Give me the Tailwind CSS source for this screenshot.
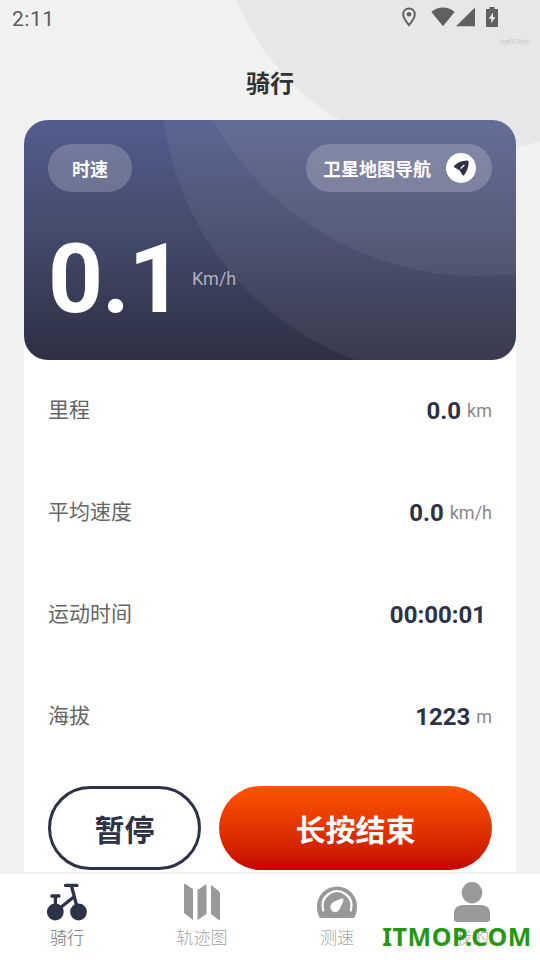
<!DOCTYPE html>
<html lang="zh-CN">
<head>
<meta charset="UTF-8">
<meta name="viewport" content="width=device-width, initial-scale=1">
<title>骑行</title>
<script src="https://cdn.jsdelivr.net/npm/@tailwindcss/browser@4"></script>
</head>
<body class="overflow-hidden bg-[#f1f1f1] font-['Roboto','Noto_Sans_CJK_SC',sans-serif]">
<div class="relative isolate flex h-[960px] w-[540px] flex-col overflow-hidden">
  <svg class="absolute inset-0 -z-10" width="540" height="200"><circle cx="463" cy="-90" r="243.5" fill="#e7e7e7"/></svg>

  <header class="relative flex h-9 shrink-0 items-center justify-between pl-3 pr-[42px] text-[#5c5c5c]">
    <span class="pt-[2px] text-[21px] leading-6 tracking-[0.5px]">2:11</span>
    <div class="flex items-center pb-[2px]">
      <svg class="mr-[15px]" width="14" height="20" viewBox="0 0 14 20" fill="none" stroke="#606060"><path d="M7 1.500C3.700 1.500 1.200 4 1.200 7.200 1.200 11 7 18.200 7 18.200S12.800 11 12.800 7.200C12.800 4 10.300 1.500 7 1.500Z" stroke-width="1.900"/><circle cx="7" cy="7.200" r="2.300" fill="#606060" stroke="none"/></svg>
      <svg width="24" height="20" viewBox="0 0 24 20" fill="#606060"><path d="M12 19.200.400 5C3 2.500 7.300.600 12 .600S21 2.500 23.600 5Z"/></svg>
      <svg class="ml-px mr-[11px]" width="19" height="20" viewBox="0 0 19 20" fill="#606060"><path d="M19 .500V19.200H0Z"/></svg>
      <svg width="12" height="22" viewBox="0 0 12 22"><path d="M3.500 1h5v2H11q1 0 1 1v16q0 1-1 1H1q-1 0-1-1V4q0-1 1-1h2.500Z" fill="#606060"/><path d="M7 6.500 2.700 12.700H5.200v4.500L9.400 11H7Z" fill="#e7e7e7"/></svg>
    </div>
    <span class="absolute right-[10px] top-9 text-[7.500px] leading-[11px] tracking-[-0.2px] text-[#cbcbcb]">6af97e6c</span>
  </header>

  <h1 class="flex h-[84px] shrink-0 items-center justify-center pt-[11px] text-[24px] leading-9 font-bold text-[#333]">骑行</h1>

  <main class="mx-6 flex h-[752px] shrink-0 flex-col bg-linear-to-b from-transparent from-[100px] to-white to-[100px]">
    <section class="relative isolate flex h-60 shrink-0 flex-col overflow-hidden rounded-3xl bg-linear-to-b from-[#535d8d] via-[#444b6d] via-45% to-[#2d3043] px-6 pt-6 text-white">
      <svg class="absolute inset-0 -z-10" width="492" height="240" fill="#fff"><circle cx="434.500" cy="-39" r="297.500" fill-opacity=".055"/><circle cx="454" cy="-147" r="303" fill-opacity=".055"/></svg>
      <div class="flex items-center justify-between">
        <div class="flex h-12 w-[84px] items-center justify-center rounded-full bg-white/20 pt-[3px] text-[18px] font-bold">时速</div>
        <div class="flex h-12 w-[186px] items-center justify-between rounded-full bg-white/20 pl-[17px] pr-4">
          <span class="pt-[3px] text-[18px] font-bold">卫星地图导航</span>
          <span class="flex size-[30px] items-center justify-center rounded-full bg-white">
            <svg width="30" height="30" viewBox="0 0 30 30"><path d="M8.700 12.200C12 9.500 16 7.700 20.800 7.600q2-.100 1.900 2C22.500 14 21 18.500 18.300 22q-1.400 1.300-2.200-.400L13.800 17.400 8.600 14.500q-1.500-1.100.100-2.300Z" fill="#2d3246"/><path d="M14.900 15.200 18 12.300" stroke="#fff" stroke-width="1.200" stroke-linecap="round"/></svg>
          </span>
        </div>
      </div>
      <div class="mt-[29px] flex items-start">
        <span class="w-[144px] text-[96px] leading-[116px] font-bold tracking-[-1.200px]">0.1</span>
        <span class="mt-[46px] text-[18px] leading-6 text-[#b0b2be]">Km/h</span>
      </div>
    </section>

    <dl class="flex h-[408px] shrink-0 flex-col px-6 text-[#666]">
      <div class="flex h-[102px] items-center justify-between"><dt class="pb-[3px] text-[21px] leading-8">里程</dt><dd class="flex items-center gap-[6px]"><b class="text-[24px] leading-8 text-[#2d3246]">0.0</b><span class="text-[18px] leading-8 text-[#888]">km</span></dd></div>
      <div class="flex h-[102px] items-center justify-between"><dt class="pb-[3px] text-[21px] leading-8">平均速度</dt><dd class="flex items-center gap-[6px]"><b class="text-[24px] leading-8 text-[#2d3246]">0.0</b><span class="text-[18px] leading-8 text-[#888]">km/h</span></dd></div>
      <div class="flex h-[102px] items-center justify-between"><dt class="pb-[3px] text-[21px] leading-8">运动时间</dt><dd class="pr-[6px]"><b class="text-[24px] leading-8 text-[#2d3246]">00:00:01</b></dd></div>
      <div class="flex h-[102px] items-center justify-between"><dt class="pb-[3px] text-[21px] leading-8">海拔</dt><dd class="flex items-center gap-[6px]"><b class="text-[24px] leading-8 text-[#2d3246]">1223</b><span class="text-[18px] leading-8 text-[#888]">m</span></dd></div>
    </dl>

    <div class="flex gap-[18px] px-6 pt-[18px] text-[30px] font-bold">
      <button class="h-[84px] w-[153px] rounded-full border-3 border-[#2d3246] pt-[4px] text-[#2d3246]">暂停</button>
      <button class="h-[84px] flex-1 rounded-full bg-linear-to-b from-[#ff5300] to-[#c50000] pt-[4px] text-white">长按结束</button>
    </div>
  </main>

  <nav class="relative grid h-[88px] shrink-0 grid-cols-4 border-t-2 border-[#f3f3f3] bg-white text-[17px] leading-6 font-light text-[#a5a5a5]">
    <div class="flex flex-col items-center pt-[6px] pr-px text-[#707070]">
      <svg class="shrink-0" width="42" height="44" viewBox="0 0 42 44" fill="none" stroke="#2d3246" stroke-linecap="round"><circle cx="9.300" cy="32" r="8.400" fill="#2d3246" stroke="none"/><circle cx="32.500" cy="32" r="8.400" fill="#2d3246" stroke="none"/><path d="M5.800 16H13M9.400 16v10M19.500 5.400H31M25.500 6 31 27M27.800 17 13 28.700" stroke-width="3.300"/></svg>
      <span class="mt-[2px]">骑行</span>
    </div>
    <div class="flex flex-col items-center pt-[6px] pr-px">
      <svg class="shrink-0" width="36" height="44" viewBox="0 0 36 44" fill="#999"><path d="M0 5q0-2 1.800-.800L9 9V40L0 33ZM13.500 10 22.500 4V34L13.500 40ZM27 5 34.800 11Q36 12 36 13.500V39q0 2-1.500.700L27 34Z"/></svg>
      <span class="mt-[2px]">轨迹图</span>
    </div>
    <div class="flex flex-col items-center pt-[6px] pr-px">
      <svg class="shrink-0" width="42" height="44" viewBox="0 0 42 44"><path d="M4 38Q1 34 1 26.500a20 20 0 0 1 40 0q0 7-3 11.500Z" fill="#999"/><path d="M7.200 30.500Q4.500 20 12.500 14q8.500-6 17 0Q37.500 20 34.800 30.500" fill="none" stroke="#fff" stroke-width="2.200" stroke-linecap="round"/><path d="M16.500 22.500 24.500 18.700q3.500-.700 2.900 2.300L23.500 29.500q-3.300 4.500-7.500 1.500-3.500-4 .500-8.500Z" fill="#fff"/></svg>
      <span class="mt-[2px]">测速</span>
    </div>
    <div class="flex flex-col items-center pt-[6px] pr-px">
      <svg class="shrink-0" width="36" height="44" viewBox="0 0 36 44" fill="#999"><ellipse cx="18" cy="12.800" rx="10.300" ry="10.700"/><path d="M8 25H28q8 1 8 8v6q0 3-3 3H3q-3 0-3-3V33q0-7 8-8Z"/></svg>
      <span class="mt-[2px]">我的</span>
    </div>
    <span class="absolute right-[8px] top-[45px] font-['Noto_Sans',sans-serif] text-[25px] leading-[34px] font-bold tracking-[0.600px] whitespace-nowrap text-[#259812]">ITMOP.COM</span>
  </nav>
</div>
</body>
</html>
